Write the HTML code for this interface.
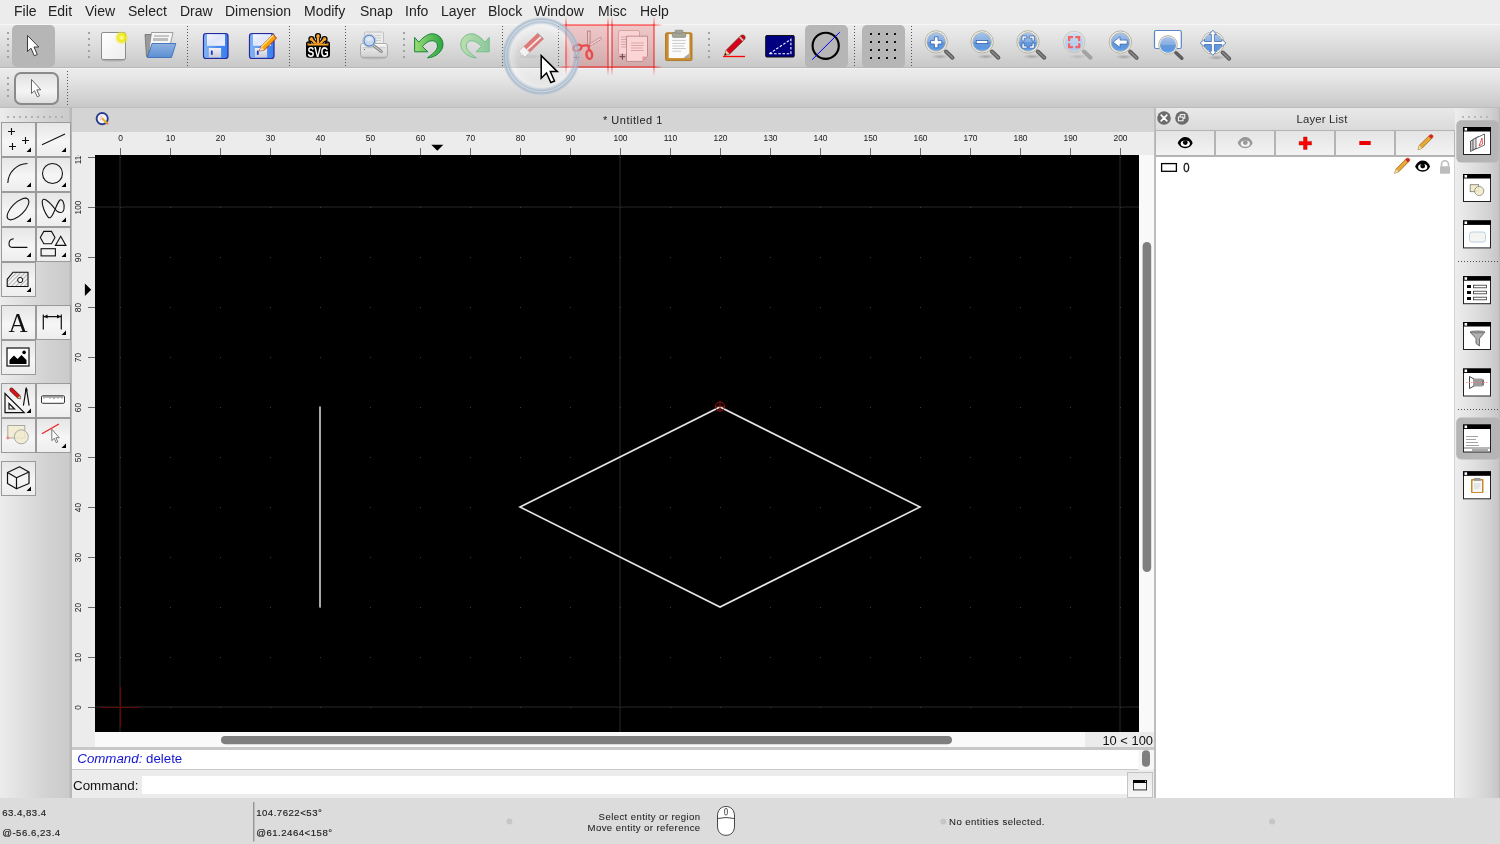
<!DOCTYPE html>
<html><head><meta charset="utf-8">
<style>
*{box-sizing:border-box}
html,body{margin:0;padding:0}
body{will-change:transform}
body{width:1500px;height:844px;position:relative;overflow:hidden;background:#ececec;font-family:"Liberation Sans",sans-serif;color:#000}
.a{position:absolute}
.menu span{position:absolute;top:4px;font-size:14px;line-height:14px;color:#222}
.tb{position:absolute;left:0;width:1500px;background:linear-gradient(#ececec,#e5e5e5 25%,#d8d8d8 60%,#c8c8c8)}
.vdots{position:absolute;width:1px;background:repeating-linear-gradient(#6a6a6a 0 1px,transparent 1px 3px)}
.hdl{position:absolute;width:2px;height:26px;background:repeating-linear-gradient(#a8a8a8 0 2px,transparent 2px 6px)}
.tbtn{position:absolute;background:linear-gradient(#eeeeee,#e6e6e6 45%,#f6f6f6 55%,#ececec);border:1px solid #9a9a9a}
.corner{position:absolute;right:3px;bottom:3px;width:0;height:0;border-left:9px solid transparent;border-bottom:9px solid #000}
svg{position:absolute;overflow:visible}
</style></head><body>

<!-- MENU BAR -->
<div class="a menu" style="left:0;top:0;width:1500px;height:24px;background:#ececec">
<span style="left:14px">File</span>
<span style="left:48px">Edit</span>
<span style="left:85px">View</span>
<span style="left:128px">Select</span>
<span style="left:180px">Draw</span>
<span style="left:225px">Dimension</span>
<span style="left:304px">Modify</span>
<span style="left:360px">Snap</span>
<span style="left:405px">Info</span>
<span style="left:441px">Layer</span>
<span style="left:488px">Block</span>
<span style="left:534px">Window</span>
<span style="left:598px">Misc</span>
<span style="left:640px">Help</span>
</div>

<!-- TOOLBAR 1 -->
<div class="tb" style="top:24px;height:44px;border-top:1px solid #f6f6f6;border-bottom:1px solid #b9b9b9"></div>
<!-- TOOLBAR 2 -->
<div class="tb" style="top:68px;height:40px;border-top:1px solid #f2f2f2;border-bottom:1px solid #bcbcbc"></div>


<!-- TOOLBAR ICONS -->
<svg class="a" style="left:0;top:0" width="1500" height="110" viewBox="0 0 1500 110">
<defs>
<linearGradient id="gBlueDisc" x1="0" y1="0" x2="0" y2="1"><stop offset="0" stop-color="#a9c4ea"/><stop offset="0.48" stop-color="#86ade0"/><stop offset="0.5" stop-color="#6799d8"/><stop offset="0.85" stop-color="#5d98e4"/><stop offset="1" stop-color="#7eb0ee"/></linearGradient>
<linearGradient id="gBlueDiscF" x1="0" y1="0" x2="0" y2="1"><stop offset="0" stop-color="#d0def2"/><stop offset="0.5" stop-color="#bcd0ec"/><stop offset="1" stop-color="#b0cbee"/></linearGradient>
<linearGradient id="gFloppy" x1="0" y1="0" x2="1" y2="0"><stop offset="0" stop-color="#86b8f6"/><stop offset="0.5" stop-color="#4f8ef0"/><stop offset="1" stop-color="#3a7ff0"/></linearGradient>
<linearGradient id="gLabel" x1="0" y1="0" x2="1" y2="1"><stop offset="0" stop-color="#f4f6ff"/><stop offset="0.5" stop-color="#dfe6fb"/><stop offset="1" stop-color="#f2f4fc"/></linearGradient>
<linearGradient id="gShut" x1="0" y1="0" x2="0" y2="1"><stop offset="0" stop-color="#f0f0f4"/><stop offset="1" stop-color="#c9c9d6"/></linearGradient>
<linearGradient id="gUndo" x1="0" y1="0" x2="1" y2="0"><stop offset="0" stop-color="#9bdc74"/><stop offset="1" stop-color="#2fa544"/></linearGradient>
<linearGradient id="gRedo" x1="0" y1="0" x2="1" y2="0"><stop offset="0" stop-color="#8cc89c"/><stop offset="1" stop-color="#bde0ae"/></linearGradient>
<linearGradient id="gFolder" x1="0" y1="0" x2="0" y2="1"><stop offset="0" stop-color="#8fb2e0"/><stop offset="1" stop-color="#5b8fd4"/></linearGradient>
<linearGradient id="gPage" x1="0" y1="0" x2="1" y2="1"><stop offset="0" stop-color="#ffffff"/><stop offset="1" stop-color="#ececec"/></linearGradient>
<linearGradient id="gPrinter" x1="0" y1="0" x2="0" y2="1"><stop offset="0" stop-color="#f4f4f4"/><stop offset="1" stop-color="#cfcfcf"/></linearGradient>
<radialGradient id="gGlow"><stop offset="0" stop-color="#ffffe0"/><stop offset="0.2" stop-color="#fbf870"/><stop offset="0.5" stop-color="#eee810"/><stop offset="0.75" stop-color="#eee830" stop-opacity="0.6"/><stop offset="1" stop-color="#eee830" stop-opacity="0"/></radialGradient>
<radialGradient id="gShadow"><stop offset="0" stop-color="#000" stop-opacity="0.22"/><stop offset="1" stop-color="#000" stop-opacity="0"/></radialGradient>
</defs>

<!-- handles -->
<g fill="#a2a2a2">
<rect x="7" y="32" width="2" height="2"/><rect x="7" y="38" width="2" height="2"/><rect x="7" y="44" width="2" height="2"/><rect x="7" y="50" width="2" height="2"/><rect x="7" y="56" width="2" height="2"/>
<rect x="88" y="32" width="2" height="2"/><rect x="88" y="38" width="2" height="2"/><rect x="88" y="44" width="2" height="2"/><rect x="88" y="50" width="2" height="2"/><rect x="88" y="56" width="2" height="2"/>
<rect x="403" y="32" width="2" height="2"/><rect x="403" y="38" width="2" height="2"/><rect x="403" y="44" width="2" height="2"/><rect x="403" y="50" width="2" height="2"/><rect x="403" y="56" width="2" height="2"/>
<rect x="708" y="32" width="2" height="2"/><rect x="708" y="38" width="2" height="2"/><rect x="708" y="44" width="2" height="2"/><rect x="708" y="50" width="2" height="2"/><rect x="708" y="56" width="2" height="2"/>
<rect x="7" y="77" width="2" height="2"/><rect x="7" y="83" width="2" height="2"/><rect x="7" y="89" width="2" height="2"/><rect x="7" y="95" width="2" height="2"/>
</g>
<!-- dotted separators -->
<g stroke="#555" stroke-width="1" stroke-dasharray="1 2">
<line x1="187.5" y1="26" x2="187.5" y2="66"/>
<line x1="289.5" y1="26" x2="289.5" y2="66"/>
<line x1="345.5" y1="26" x2="345.5" y2="66"/>
<line x1="502.5" y1="26" x2="502.5" y2="66"/>
<line x1="558.5" y1="26" x2="558.5" y2="66"/>
<line x1="854.5" y1="26" x2="854.5" y2="66"/>
<line x1="911.5" y1="26" x2="911.5" y2="66"/>
<line x1="67.5" y1="71" x2="67.5" y2="105"/>
</g>

<!-- selected buttons -->
<rect x="12" y="25" width="43" height="42" rx="5" fill="#b6b6b6"/>
<rect x="805" y="25" width="43" height="43" rx="5" fill="#b6b6b6"/>
<rect x="862" y="25" width="43" height="43" rx="5" fill="#b6b6b6"/>

<!-- pointer -->
<path d="M27.5,35.5 L27.5,51.5 L31,48.2 L34.3,55.8 L37.3,54.5 L34,47 L38.8,47 Z" fill="#fff" stroke="#3a3a3a" stroke-width="1" stroke-linejoin="round"/>

<!-- toolbar2 button -->
<linearGradient id="gTb2" x1="0" y1="0" x2="0" y2="1"><stop offset="0" stop-color="#e0e0e0"/><stop offset="0.5" stop-color="#f2f2f2"/><stop offset="0.6" stop-color="#f4f4f4"/><stop offset="1" stop-color="#dcdcdc"/></linearGradient>
<rect x="15" y="73" width="43" height="31" rx="6" fill="url(#gTb2)" stroke="#8a8a8a" stroke-width="2"/>
<path d="M31.5,79.5 L31.5,93.5 L34.5,90.8 L37.3,96.8 L39.5,95.8 L36.8,89.8 L40.8,89.8 Z" fill="#fff" stroke="#555" stroke-width="0.9" stroke-linejoin="round"/>

<!-- new doc -->
<ellipse cx="113.5" cy="60" rx="12" ry="1.6" fill="#999" opacity="0.6"/>
<rect x="101.5" y="32.5" width="24" height="27" rx="1.5" fill="url(#gPage)" stroke="#8c8c8c" stroke-width="1"/>
<circle cx="121.7" cy="37.7" r="7" fill="url(#gGlow)"/>

<!-- open folder -->
<path d="M145,34.5 L151,34.5 L151,43 L147.5,56.5 L146.5,56.5 Z" fill="#9a9a9a" stroke="#6e6e6e" stroke-width="0.8"/>
<path d="M151.5,32.5 L173,32.5 L170.5,43.5 L149,50 Z" fill="#f6f6f6" stroke="#8a8a8a" stroke-width="0.8"/>
<rect x="154" y="35" width="15" height="2" fill="#c4c4c4"/><rect x="153" y="38" width="15" height="3" fill="#bdbdbd"/>
<path d="M152,43.5 L175.8,43.5 L171.5,57.5 L147.3,57.5 Z" fill="url(#gFolder)" stroke="#3c6fb8" stroke-width="0.9" stroke-linejoin="round"/>

<!-- save -->
<g id="floppy">
<rect x="203.5" y="33.5" width="24.5" height="25" rx="2.5" fill="url(#gFloppy)" stroke="#28289a" stroke-width="1.2"/>
<rect x="207" y="34.2" width="18" height="11.6" fill="url(#gLabel)"/>
<rect x="208.8" y="48" width="12.3" height="9.5" fill="url(#gShut)"/>
<rect x="210.9" y="50.6" width="1.8" height="4.2" fill="#1038d8"/>
</g>
<use href="#floppy" x="46"/>
<path d="M259.5,51 L261,46.5 L273,34.5 L276.5,38 L264.5,50 Z" fill="#f8a10c" stroke="#a8280a" stroke-width="0.9" stroke-linejoin="round"/>
<path d="M261,46.5 L273,34.5 L274,35.5 L262,47.5 Z" fill="#ffe070"/>
<path d="M259.5,51 L261,46.5 L264.5,50 Z" fill="#f3d9a8"/>

<!-- svg logo -->
<g fill="#f9a52b" stroke="#000" stroke-width="1.3">
<circle cx="318" cy="36.2" r="2.5"/><circle cx="311.5" cy="39.2" r="2.5"/><circle cx="324.5" cy="39.2" r="2.5"/>
<circle cx="308.6" cy="44" r="2"/><circle cx="327.4" cy="44" r="2"/>
</g>
<g stroke="#000" stroke-width="4.2" stroke-linecap="round">
<line x1="318" y1="37" x2="318" y2="45"/><line x1="312.3" y1="40" x2="317" y2="45"/><line x1="323.7" y1="40" x2="319" y2="45"/>
</g>
<g stroke="#f9a52b" stroke-width="2.4" stroke-linecap="round">
<line x1="318" y1="37" x2="318" y2="45"/><line x1="312.3" y1="40" x2="317" y2="45"/><line x1="323.7" y1="40" x2="319" y2="45"/>
</g>
<circle cx="318" cy="36.2" r="1.6" fill="#f9a52b"/><circle cx="311.5" cy="39.2" r="1.6" fill="#f9a52b"/><circle cx="324.5" cy="39.2" r="1.6" fill="#f9a52b"/>
<rect x="306" y="43.5" width="24" height="14.3" rx="3" fill="#000"/>
<path d="M307.5,44.3 Q318,42 328.5,44.3 L328.5,45.5 L307.5,45.5 Z" fill="#f9a52b"/>
<text transform="translate(318,56.6) scale(0.74,1)" x="0" y="0" text-anchor="middle" font-family="Liberation Sans" font-weight="bold" font-size="13.8" letter-spacing="-0.3" fill="#fff">SVG</text>

<!-- print preview -->
<rect x="364.5" y="32" width="19" height="13" rx="1" fill="#ececec" stroke="#b8b8b8" stroke-width="0.8"/>
<g stroke="#cfcfcf" stroke-width="1"><line x1="375" y1="35.5" x2="381" y2="35.5"/><line x1="375" y1="38" x2="381" y2="38"/><line x1="375" y1="40.5" x2="381" y2="40.5"/></g>
<ellipse cx="374" cy="57.8" rx="13" ry="1.6" fill="#aaa" opacity="0.6"/>
<rect x="360.5" y="43.5" width="27" height="13.8" rx="2.5" fill="url(#gPrinter)" stroke="#a4a4a4" stroke-width="0.9"/>
<line x1="362.5" y1="47.8" x2="385.5" y2="47.8" stroke="#bdbdbd" stroke-width="0.8"/>
<line x1="362.5" y1="44.6" x2="385.5" y2="44.6" stroke="#fff" stroke-width="0.8"/>
<circle cx="364.5" cy="49.5" r="0.6" fill="#555"/>
<line x1="373.5" y1="45.5" x2="381.3" y2="51.5" stroke="#8a8a8a" stroke-width="3" stroke-linecap="round"/>
<line x1="373.5" y1="45.5" x2="381.3" y2="51.5" stroke="#d8d8d8" stroke-width="1" stroke-linecap="round"/>
<circle cx="369.3" cy="40.7" r="6.6" fill="#f4f4f4" stroke="#b0b0b0" stroke-width="0.7"/>
<circle cx="369.3" cy="40.7" r="5.4" fill="#c6d8ee" stroke="#4c80cc" stroke-width="1.1"/>
<ellipse cx="369" cy="39" rx="3.5" ry="2.2" fill="#e6eef8" opacity="0.8"/>
<!-- undo / redo -->
<path d="M414.6,37.4 L418.8,42.2 C422,38.5 427,33.8 432,33.8 C438.5,33.8 443,38.5 443,44.5 C443,51 436,57.5 427.5,57.8 C431,55 437.5,51 437.5,46 C437.5,42.5 435,40.7 432,40.7 C428.5,40.7 425,43.5 422.4,46.4 L427.8,51.8 L414.6,51.8 Z" fill="url(#gUndo)" stroke="#17843a" stroke-width="1" stroke-linejoin="round"/>
<path transform="translate(903.8,0) scale(-1,1)" d="M414.6,37.4 L418.8,42.2 C422,38.5 427,33.8 432,33.8 C438.5,33.8 443,38.5 443,44.5 C443,51 436,57.5 427.5,57.8 C431,55 437.5,51 437.5,46 C437.5,42.5 435,40.7 432,40.7 C428.5,40.7 425,43.5 422.4,46.4 L427.8,51.8 L414.6,51.8 Z" fill="url(#gRedo)" stroke="#78bd8e" stroke-width="1" stroke-linejoin="round"/>

<!-- eraser -->
<ellipse cx="529" cy="56.5" rx="10" ry="1.8" fill="#bbb" opacity="0.5"/>
<path d="M537.4,33.2 L543.7,38.9 L524.8,57.2 L518.5,51.2 Z" fill="#df7474"/>
<path d="M540.5,36 L541.8,37.2 L522,55.6 L520.8,54.4 Z" fill="#f0f0f0"/>
<path d="M523.5,46.4 L529.8,52.3 L524.8,57.2 L518.5,51.2 Z" fill="#f2f2f2" stroke="#b8b8b8" stroke-width="0.6"/>
<path d="M537.4,33.2 L543.7,38.9" stroke="#9a8c8c" stroke-width="1"/>

<!-- cut / copy (faded) -->
<g>
<path d="M587.6,31 L590.2,31 L589.8,46.5 L587.8,46.5 Z" fill="#f8f8f8" stroke="#8a6a6a" stroke-width="0.7"/>
<path d="M600.5,37.3 L601.3,39.3 L590.3,45.8 L589.2,44.2 Z" fill="#f8f8f8" stroke="#8a6a6a" stroke-width="0.7" stroke-dasharray="1.2 0.6"/>
<ellipse cx="577.3" cy="47.8" rx="4.3" ry="2.9" transform="rotate(-18 577.3 47.8)" fill="none" stroke="#e25a5a" stroke-width="2.4"/>
<ellipse cx="589.3" cy="54.6" rx="2.8" ry="4.3" transform="rotate(-8 589.3 54.6)" fill="none" stroke="#e25a5a" stroke-width="2.4"/>
<path d="M581.2,46.2 C584,45.5 586.5,45 588.6,45.8 L589,50" fill="none" stroke="#e25a5a" stroke-width="2.3"/>
</g>
<path d="M573.3,57.4 h6 M576.3,54.4 v6" stroke="#6a5a5a" stroke-width="1"/>
<rect x="618.5" y="30.5" width="21" height="24" rx="1.5" fill="#f8f8f8" stroke="#c8b4b4" stroke-width="0.8"/>
<path d="M626.5,36.2 L647.5,36.2 L647.5,56.5 L642.5,61.4 L626.5,61.4 Z" fill="#fbfbfb" stroke="#a89090" stroke-width="0.8"/>
<path d="M642.5,61.4 L642.5,56.5 L647.5,56.5 Z" fill="#d9b8b8"/>
<g stroke="#c7a9a9" stroke-width="0.7"><line x1="631" y1="43" x2="644" y2="43"/><line x1="631" y1="45.5" x2="644" y2="45.5"/><line x1="631" y1="48" x2="643" y2="48"/><line x1="631" y1="50.5" x2="644" y2="50.5"/><line x1="621" y1="37" x2="626" y2="37"/><line x1="621" y1="39.5" x2="626" y2="39.5"/><line x1="621" y1="42" x2="626" y2="42"/><line x1="621" y1="44.5" x2="626" y2="44.5"/><line x1="621" y1="47" x2="626" y2="47"/></g>
<path d="M619.4,56.7 h6 M622.4,53.7 v6" stroke="#5a4646" stroke-width="1"/>

<!-- paste clipboard -->
<rect x="665.5" y="32.8" width="26.5" height="27.8" rx="1.5" fill="#c98a2c" stroke="#a56d1c" stroke-width="0.8"/>
<rect x="668.7" y="34.1" width="20.7" height="24" fill="#fbfbfb"/>
<path d="M683.4,58.1 L689.4,53.3 L689.4,58.1 Z" fill="#a8a8a8"/>
<rect x="672.3" y="32.5" width="13.5" height="4.9" rx="1.2" fill="#a4a496" stroke="#808078" stroke-width="0.6"/>
<rect x="675" y="30.2" width="8" height="3" rx="0.8" fill="#a4a496" stroke="#808078" stroke-width="0.6"/>
<g stroke="#c4c4c4" stroke-width="0.9"><line x1="672.3" y1="40.4" x2="685.8" y2="40.4"/><line x1="672.3" y1="43.4" x2="685.3" y2="43.4"/><line x1="672.3" y1="46" x2="684" y2="46"/><line x1="672.3" y1="48.5" x2="685.8" y2="48.5"/><line x1="672.3" y1="51.2" x2="681" y2="51.2"/></g>

<!-- pencil with red line -->
<path d="M724.5,55.4 L726.2,50.2 L740.5,35.9 C742,34.4 744.5,35 745,36.6 C745.6,38.2 744.5,39.5 743.5,40.5 L729.6,54 Z" fill="#d8001c" stroke="#6a3a10" stroke-width="0.8" stroke-linejoin="round"/>
<path d="M724.5,55.4 L726.2,50.2 L729.6,54 Z" fill="#f0c8a0"/>
<path d="M724.5,55.4 L725.3,53 L726.9,54.6 Z" fill="#111"/>
<path d="M739,37.5 L742.6,41.2 L743.8,40 L740.2,36.3 Z" fill="#c8c8c8"/>
<line x1="723" y1="56.5" x2="745" y2="56.5" stroke="#ff0000" stroke-width="1.3"/>

<!-- dim icon -->
<rect x="765.7" y="35.5" width="28.5" height="21.5" rx="1" fill="#000080" stroke="#111" stroke-width="1"/>
<path d="M769.3,53.7 L790.9,39.3 L790.9,53.7 Z" fill="none" stroke="#fff" stroke-width="1.1" stroke-dasharray="2.6 1.6"/>

<!-- circle w/ line -->
<circle cx="825.7" cy="45.8" r="13.1" fill="none" stroke="#000" stroke-width="2.1"/>
<line x1="812.2" y1="59.7" x2="839.8" y2="32.1" stroke="#0000ff" stroke-width="1"/>

<!-- grid dots -->
<g fill="#111">
<rect x="870" y="33" width="2" height="2"/><rect x="878" y="33" width="2" height="2"/><rect x="886" y="33" width="2" height="2"/><rect x="894" y="33" width="2" height="2"/>
<rect x="870" y="41" width="2" height="2"/><rect x="878" y="41" width="2" height="2"/><rect x="886" y="41" width="2" height="2"/><rect x="894" y="41" width="2" height="2"/>
<rect x="870" y="49" width="2" height="2"/><rect x="878" y="49" width="2" height="2"/><rect x="886" y="49" width="2" height="2"/><rect x="894" y="49" width="2" height="2"/>
<rect x="870" y="57" width="2" height="2"/><rect x="878" y="57" width="2" height="2"/><rect x="886" y="57" width="2" height="2"/><rect x="894" y="57" width="2" height="2"/>
</g>

<!-- magnifiers -->
<g id="mag">
<ellipse cx="939.8" cy="56.6" rx="9" ry="2.4" fill="url(#gShadow)"/>
<line x1="946" y1="51.5" x2="952.5" y2="57.7" stroke="#5e5e5e" stroke-width="4" stroke-linecap="round"/>
<line x1="946" y1="51.5" x2="952.5" y2="57.7" stroke="#8a8a8a" stroke-width="1.5" stroke-linecap="round"/>
<circle cx="936.2" cy="41.9" r="11.2" fill="#f3f2ec" stroke="#aeac9c" stroke-width="0.9"/>
<circle cx="936.2" cy="41.9" r="9.4" fill="url(#gBlueDisc)" stroke="#b9b7a8" stroke-width="0.8"/>
</g>
<path d="M934.4,36.8 h3.6 v3.8 h3.8 v3.4 h-3.8 v3.8 h-3.6 v-3.8 h-3.8 v-3.4 h3.8 Z" fill="#fff" stroke="#2f5fa8" stroke-width="0.8"/>
<use href="#mag" x="45.9"/>
<rect x="976.2" y="40.4" width="11.6" height="3.2" fill="#fff" stroke="#2f5fa8" stroke-width="0.8"/>
<use href="#mag" x="91.8"/>
<g fill="#fff" stroke="#2f5fa8" stroke-width="0.7">
<path d="M1022,36 h5 v2.2 h-2.8 v2.8 h-2.2 Z"/><path d="M1034.3,36 h-5 v2.2 h2.8 v2.8 h2.2 Z"/>
<path d="M1022,48.2 h5 v-2.2 h-2.8 v-2.8 h-2.2 Z"/><path d="M1034.3,48.2 h-5 v-2.2 h2.8 v-2.8 h2.2 Z"/>
</g>
<g opacity="0.55">
<ellipse cx="1077.8" cy="56.6" rx="9" ry="2.4" fill="url(#gShadow)"/>
<line x1="1084" y1="51.5" x2="1090.5" y2="57.7" stroke="#7a7a7a" stroke-width="4" stroke-linecap="round"/>
<circle cx="1074.2" cy="41.9" r="10.7" fill="#efeee6" stroke="#b7b5a6" stroke-width="1.1"/>
</g>
<circle cx="1074.2" cy="41.9" r="9.5" fill="url(#gBlueDiscF)"/>
<g fill="#f06464">
<path d="M1068,36 h5 v2.2 h-2.8 v2.8 h-2.2 Z"/><path d="M1080.3,36 h-5 v2.2 h2.8 v2.8 h2.2 Z"/>
<path d="M1068,48.2 h5 v-2.2 h-2.8 v-2.8 h-2.2 Z"/><path d="M1080.3,48.2 h-5 v-2.2 h2.8 v-2.8 h2.2 Z"/>
</g>
<use href="#mag" x="184.2" y="0.2"/>
<path d="M1113.2,42.1 L1120,36.8 L1120,40.1 L1127.2,40.1 L1127.2,44.1 L1120,44.1 L1120,47.5 Z" fill="#fff" stroke="#2f5fa8" stroke-width="0.7" stroke-linejoin="round"/>
<!-- zoom window -->
<rect x="1154.5" y="30.5" width="26.8" height="18" rx="1.5" fill="#fff" stroke="#5a86c6" stroke-width="1.2"/>
<line x1="1176" y1="52.8" x2="1181.8" y2="58.2" stroke="#5e5e5e" stroke-width="3.6" stroke-linecap="round"/>
<circle cx="1168" cy="44.9" r="9.3" fill="#efeee6" stroke="#b7b5a6" stroke-width="1"/>
<circle cx="1168" cy="44.9" r="8" fill="url(#gBlueDisc)"/>
<!-- pan -->
<use href="#mag" x="276.7" y="1"/>
<g fill="#fff" stroke="#2f5fa8" stroke-width="0.7" stroke-linejoin="round">
<path d="M1212.9,30.2 L1216.5,34.5 L1214.4,34.5 L1214.4,41.5 L1221.7,41.5 L1221.7,39.4 L1226,43 L1221.7,46.6 L1221.7,44.5 L1214.4,44.5 L1214.4,51.2 L1216.5,51.2 L1212.9,55.3 L1209.3,51.2 L1211.4,51.2 L1211.4,44.5 L1204.5,44.5 L1204.5,46.6 L1200.2,43 L1204.5,39.4 L1204.5,41.5 L1211.4,41.5 L1211.4,34.5 L1209.3,34.5 Z"/>
</g>

<!-- red highlight boxes -->
<rect x="566" y="25" width="42" height="42" fill="#ff0000" fill-opacity="0.15"/>
<rect x="612" y="25" width="42" height="42" fill="#ff0000" fill-opacity="0.15"/>
<rect x="557" y="24.2" width="106" height="1.6" fill="url(#gHL)"/>
<rect x="557" y="66.2" width="106" height="1.6" fill="url(#gHL)"/>
<rect x="565.2" y="16" width="1.6" height="60" fill="url(#gVL)"/>
<rect x="607.2" y="16" width="1.6" height="60" fill="url(#gVL)"/>
<rect x="611.2" y="16" width="1.6" height="60" fill="url(#gVL)"/>
<rect x="653.2" y="16" width="1.6" height="60" fill="url(#gVL)"/>

<!-- click ring + cursor -->
<defs>
<radialGradient id="gRing" cx="541.3" cy="56.2" r="39.5" gradientUnits="userSpaceOnUse">
<stop offset="0" stop-color="#fff" stop-opacity="0"/>
<stop offset="0.6" stop-color="#fff" stop-opacity="0.05"/>
<stop offset="0.78" stop-color="#fff" stop-opacity="0.35"/>
<stop offset="0.83" stop-color="#b8cadb" stop-opacity="0.55"/>
<stop offset="0.87" stop-color="#9fb5cb" stop-opacity="0.75"/>
<stop offset="0.9" stop-color="#c4d2e0" stop-opacity="0.6"/>
<stop offset="0.93" stop-color="#9ab0c7" stop-opacity="0.8"/>
<stop offset="0.965" stop-color="#a9bdd0" stop-opacity="0.55"/>
<stop offset="1" stop-color="#b0c2d4" stop-opacity="0"/>
</radialGradient>
<linearGradient id="gHL" x1="557" y1="0" x2="663" y2="0" gradientUnits="userSpaceOnUse"><stop offset="0" stop-color="#ff0000" stop-opacity="0"/><stop offset="0.09" stop-color="#ff0000" stop-opacity="0.55"/><stop offset="0.91" stop-color="#ff0000" stop-opacity="0.55"/><stop offset="1" stop-color="#ff0000" stop-opacity="0"/></linearGradient>
<linearGradient id="gVL" x1="0" y1="16" x2="0" y2="76" gradientUnits="userSpaceOnUse"><stop offset="0" stop-color="#ff0000" stop-opacity="0"/><stop offset="0.15" stop-color="#ff0000" stop-opacity="0.55"/><stop offset="0.82" stop-color="#ff0000" stop-opacity="0.55"/><stop offset="1" stop-color="#ff0000" stop-opacity="0"/></linearGradient>
</defs>
<circle cx="541.3" cy="56.2" r="39.5" fill="url(#gRing)"/>
<path d="M541.2,55.6 L541.2,78.2 L546.5,73 L550.8,82.5 L554.5,81 L550.3,71.6 L557.4,71.6 Z" fill="#fff" stroke="#000" stroke-width="1.5" stroke-linejoin="miter"/>
</svg>

<!-- LEFT TOOL PANEL -->
<div class="a" style="left:0;top:108px;width:72px;height:690px;background:linear-gradient(90deg,#ececec,#e2e2e2 25%,#d2d2d2 65%,#cbcbcb 96%,#b9b9b9 97.2%,#b9b9b9)"></div>
<svg class="a" style="left:0;top:100px" width="72" height="410" viewBox="0 100 72 410">
<defs>
<linearGradient id="gBtn" x1="0" y1="0" x2="0" y2="1"><stop offset="0" stop-color="#e6e6e6"/><stop offset="0.35" stop-color="#efefef"/><stop offset="0.55" stop-color="#f6f6f6"/><stop offset="1" stop-color="#ededed"/></linearGradient>
<pattern id="hatch" width="3" height="3" patternUnits="userSpaceOnUse" patternTransform="rotate(45)"><line x1="0" y1="0" x2="0" y2="3" stroke="#555" stroke-width="0.8"/></pattern>
</defs>
<g fill="#b0b0b0">
<rect x="7" y="116" width="2" height="2"/><rect x="13" y="116" width="2" height="2"/><rect x="19" y="116" width="2" height="2"/><rect x="25" y="116" width="2" height="2"/><rect x="31" y="116" width="2" height="2"/><rect x="37" y="116" width="2" height="2"/><rect x="43" y="116" width="2" height="2"/><rect x="49" y="116" width="2" height="2"/><rect x="55" y="116" width="2" height="2"/><rect x="61" y="116" width="2" height="2"/>
</g>
<g fill="url(#gBtn)" stroke="#9a9a9a" stroke-width="1">
<rect x="1.5" y="122.5" width="34" height="34"/><rect x="36.5" y="122.5" width="34" height="34"/>
<rect x="1.5" y="157.5" width="34" height="34"/><rect x="36.5" y="157.5" width="34" height="34"/>
<rect x="1.5" y="192.5" width="34" height="34"/><rect x="36.5" y="192.5" width="34" height="34"/>
<rect x="1.5" y="227.5" width="34" height="34"/><rect x="36.5" y="227.5" width="34" height="34"/>
<rect x="1.5" y="262.5" width="34" height="34"/>
<rect x="1.5" y="305.5" width="34" height="34"/><rect x="36.5" y="305.5" width="34" height="34"/>
<rect x="1.5" y="340.5" width="34" height="34"/>
<rect x="1.5" y="383.5" width="34" height="34"/><rect x="36.5" y="383.5" width="34" height="34"/>
<rect x="1.5" y="418.5" width="34" height="34"/><rect x="36.5" y="418.5" width="34" height="34"/>
<rect x="1.5" y="461.5" width="34" height="34"/>
</g>
<g fill="#000">
<path d="M31,147.5 L31,152 L26.5,152 Z"/><path d="M66,147.5 L66,152 L61.5,152 Z"/>
<path d="M31,182.5 L31,187 L26.5,187 Z"/><path d="M66,182.5 L66,187 L61.5,187 Z"/>
<path d="M31,217.5 L31,222 L26.5,222 Z"/><path d="M66,217.5 L66,222 L61.5,222 Z"/>
<path d="M31,252.5 L31,257 L26.5,257 Z"/><path d="M66,252.5 L66,257 L61.5,257 Z"/>
<path d="M31,287.5 L31,292 L26.5,292 Z"/>
<path d="M66,330.5 L66,335 L61.5,335 Z"/>
<path d="M31,408.5 L31,413 L26.5,413 Z"/>
<path d="M66,443.5 L66,448 L61.5,448 Z"/>
<path d="M31,486.5 L31,491 L26.5,491 Z"/>
</g>
<g fill="none" stroke="#111" stroke-width="1.1">
<!-- points -->
<path d="M8,131.5 h7 M11.5,128 v7 M22,140.5 h7 M25.5,137 v7 M9,146.5 h7 M12.5,143 v7"/>
<!-- line -->
<line x1="42" y1="144.7" x2="65" y2="134.1"/>
<!-- arc -->
<path d="M7.8,183 A20,20 0 0 1 27.5,163.5"/>
<!-- circle -->
<circle cx="52.5" cy="173.5" r="10"/>
<!-- ellipse -->
<ellipse cx="18" cy="209" rx="14" ry="6.2" transform="rotate(-45 18 209)"/>
<!-- spline -->
<path d="M42.2,201.5 C42.5,196 49,201 55,209 C58,213.5 63,214 64,209 C65,203 62,198.5 60,200 C57.5,202 55.5,209 53,214 C51.5,217 50,219 48,217 C45,213 42,206 42.2,201.5 Z"/>
<!-- polyline -->
<path d="M13.8,238.8 C10.5,239 9,241.5 9,244 C9,246 10.5,247.4 13,247.4 L27.4,247.4"/>
<!-- shapes -->
<path d="M40.3,237.6 L43.8,231.4 L51.5,231.4 L55,237.6 L51.5,243.8 L43.8,243.8 Z"/>
<path d="M60.7,236.3 L65.9,245.4 L55.4,245.4 Z"/>
<rect x="41.1" y="248.7" width="14.3" height="7.2"/>
</g>
<!-- hatch -->
<path d="M7.2,286.5 L7.2,279.3 L13,272.2 L28,272.2 L28,286.5 Z" fill="url(#hatch)" stroke="#111" stroke-width="1.1"/>
<circle cx="20.2" cy="280" r="2.6" fill="#f2f2f2" stroke="#111" stroke-width="1"/>
<!-- text A -->
<text x="18" y="332.3" text-anchor="middle" font-family="Liberation Serif" font-size="26.5" fill="#111">A</text>
<!-- dimension -->
<g stroke="#111" stroke-width="1.2" fill="none">
<path d="M43.3,314.5 v15 M61.3,314.5 v15 M43.5,316.6 h17.6"/>
</g>
<path d="M43.6,316.6 l4,-2 v4 Z M61,316.6 l-4,-2 v4 Z" fill="#111"/>
<!-- image -->
<rect x="7" y="348" width="22" height="18" fill="#fff" stroke="#222" stroke-width="1.3"/>
<path d="M9.5,364 L9.5,360 L14,355.5 L17.5,359 L21.5,355 L26.5,360 L26.5,364 Z" fill="#000"/>
<circle cx="24.1" cy="352.4" r="1.8" fill="#000"/>
<!-- set square / compass -->
<g fill="none" stroke="#111" stroke-width="1.2">
<path d="M5,393.5 L5,412.7 L24.2,412.7 Z"/>
<path d="M9,403.5 L9,409 L14.5,409 Z"/>
<path d="M26.3,387.5 L23.4,405.6 M26.3,387.5 L29.1,405.6"/>
</g>
<circle cx="26.3" cy="390" r="1.2" fill="#111"/>
<line x1="11.5" y1="389.8" x2="18.5" y2="396.6" stroke="#5a2a10" stroke-width="4.2" stroke-linecap="round"/>
<line x1="11.5" y1="389.8" x2="18.5" y2="396.6" stroke="#e01020" stroke-width="2.8" stroke-linecap="round"/>
<path d="M17.2,398 L20.8,399 L19.8,395.3 Z" fill="#f0d0a0" stroke="#5a2a10" stroke-width="0.5"/>
<!-- ruler -->
<rect x="41.5" y="395.8" width="23" height="7.5" rx="1.2" fill="#fff" stroke="#333" stroke-width="1"/>
<path d="M44,396.3 v2.2 M46,396.3 v1.6 M48,396.3 v1.6 M50,396.3 v2.2 M52,396.3 v1.6 M54,396.3 v2.8 M56,396.3 v1.6 M58,396.3 v2.2 M60,396.3 v1.6 M62,396.3 v2.2" stroke="#333" stroke-width="0.8"/>
<!-- overlap square circle -->
<rect x="7.8" y="425.5" width="17" height="12.5" fill="#f2edd4" stroke="#a8a8a0" stroke-width="1"/>
<circle cx="21.3" cy="436.8" r="7" fill="#f0ead0" fill-opacity="0.85" stroke="#a8a8a0" stroke-width="1"/>
<circle cx="7.8" cy="438" r="1.4" fill="#f08080"/>
<!-- select line -->
<line x1="41.9" y1="433.7" x2="58.9" y2="424" stroke="#f02020" stroke-width="1.3"/>
<path d="M51.8,429.2 L51.8,440.6 L54.3,438.3 L56.2,442.6 L57.8,441.9 L55.9,437.7 L59.2,437.7 Z" fill="#fff" stroke="#555" stroke-width="0.8" stroke-linejoin="round"/>
<!-- cube -->
<g fill="none" stroke="#111" stroke-width="1.2" stroke-linejoin="round">
<path d="M7.5,472.5 L19.5,466.8 L29,472 L29,483.5 L16.5,488.8 L7.5,483.5 Z"/>
<path d="M7.5,472.5 L16.5,477.8 L29,472 M16.5,477.8 L16.5,488.8"/>
</g>
</svg>

<!-- MDI AREA -->
<div class="a" style="left:72px;top:108px;width:1083px;height:24px;background:#d4d4d4"></div>
<div class="a" style="left:72px;top:132px;width:1083px;height:616px;background:#ececec"></div>
<div class="a" style="left:95px;top:155px;width:1044px;height:577px;background:#000"></div>
<div class="a" style="left:1139px;top:155px;width:16px;height:577px;background:#f9f9f9"></div>
<div class="a" style="left:95px;top:732px;width:990px;height:15px;background:#f9f9f9"></div>
<div class="a" style="left:1085px;top:732px;width:70px;height:15px;background:#ebebeb"></div>
<div class="a" style="left:72px;top:747px;width:1083px;height:3px;background:#c8c8c8"></div>
<div class="a" style="left:72px;top:750px;width:1083px;height:20px;background:#fff;border-bottom:1px solid #c8c8c8"></div>
<div class="a" style="left:72px;top:770px;width:1083px;height:28px;background:#ececec"></div>
<div class="a" style="left:142px;top:776px;width:986px;height:18px;background:#fff"></div>

<svg class="a" style="left:0;top:0" width="1500" height="844" viewBox="0 0 1500 844">
<defs><radialGradient id="gDocIco" cx="0.4" cy="0.4"><stop offset="0" stop-color="#fff"/><stop offset="0.6" stop-color="#e8e8f0"/><stop offset="1" stop-color="#c8d0e0"/></radialGradient></defs>
<circle cx="102.2" cy="118.6" r="5.6" fill="#f4f4f8" stroke="#2b3d8c" stroke-width="1.9"/>
<path d="M99.5,117.5 l3,-1.5 M100,120 l2.5,-3" stroke="#d08080" stroke-width="0.5"/>
<path d="M102.5,118.8 l4.5,4.5" stroke="#e8b020" stroke-width="2" stroke-linecap="round"/>
<circle cx="107.4" cy="123.6" r="1.1" fill="#e07070"/>
<text x="603" y="123.8" font-family="Liberation Sans" font-size="11" letter-spacing="0.5" fill="#222">* Untitled 1</text>
<g stroke="#141414" stroke-width="2">
<line x1="95" y1="707" x2="1139" y2="707"/><line x1="95" y1="207" x2="1139" y2="207"/>
<line x1="120" y1="155" x2="120" y2="732"/><line x1="620" y1="155" x2="620" y2="732"/><line x1="1120" y1="155" x2="1120" y2="732"/>
</g>
<path d="M120,707.5h1M120,657.5h1M120,607.5h1M120,557.5h1M120,507.5h1M120,457.5h1M120,407.5h1M120,357.5h1M120,307.5h1M120,257.5h1M120,207.5h1M120,157.5h1M170,707.5h1M170,657.5h1M170,607.5h1M170,557.5h1M170,507.5h1M170,457.5h1M170,407.5h1M170,357.5h1M170,307.5h1M170,257.5h1M170,207.5h1M170,157.5h1M220,707.5h1M220,657.5h1M220,607.5h1M220,557.5h1M220,507.5h1M220,457.5h1M220,407.5h1M220,357.5h1M220,307.5h1M220,257.5h1M220,207.5h1M220,157.5h1M270,707.5h1M270,657.5h1M270,607.5h1M270,557.5h1M270,507.5h1M270,457.5h1M270,407.5h1M270,357.5h1M270,307.5h1M270,257.5h1M270,207.5h1M270,157.5h1M320,707.5h1M320,657.5h1M320,607.5h1M320,557.5h1M320,507.5h1M320,457.5h1M320,407.5h1M320,357.5h1M320,307.5h1M320,257.5h1M320,207.5h1M320,157.5h1M370,707.5h1M370,657.5h1M370,607.5h1M370,557.5h1M370,507.5h1M370,457.5h1M370,407.5h1M370,357.5h1M370,307.5h1M370,257.5h1M370,207.5h1M370,157.5h1M420,707.5h1M420,657.5h1M420,607.5h1M420,557.5h1M420,507.5h1M420,457.5h1M420,407.5h1M420,357.5h1M420,307.5h1M420,257.5h1M420,207.5h1M420,157.5h1M470,707.5h1M470,657.5h1M470,607.5h1M470,557.5h1M470,507.5h1M470,457.5h1M470,407.5h1M470,357.5h1M470,307.5h1M470,257.5h1M470,207.5h1M470,157.5h1M520,707.5h1M520,657.5h1M520,607.5h1M520,557.5h1M520,507.5h1M520,457.5h1M520,407.5h1M520,357.5h1M520,307.5h1M520,257.5h1M520,207.5h1M520,157.5h1M570,707.5h1M570,657.5h1M570,607.5h1M570,557.5h1M570,507.5h1M570,457.5h1M570,407.5h1M570,357.5h1M570,307.5h1M570,257.5h1M570,207.5h1M570,157.5h1M620,707.5h1M620,657.5h1M620,607.5h1M620,557.5h1M620,507.5h1M620,457.5h1M620,407.5h1M620,357.5h1M620,307.5h1M620,257.5h1M620,207.5h1M620,157.5h1M670,707.5h1M670,657.5h1M670,607.5h1M670,557.5h1M670,507.5h1M670,457.5h1M670,407.5h1M670,357.5h1M670,307.5h1M670,257.5h1M670,207.5h1M670,157.5h1M720,707.5h1M720,657.5h1M720,607.5h1M720,557.5h1M720,507.5h1M720,457.5h1M720,407.5h1M720,357.5h1M720,307.5h1M720,257.5h1M720,207.5h1M720,157.5h1M770,707.5h1M770,657.5h1M770,607.5h1M770,557.5h1M770,507.5h1M770,457.5h1M770,407.5h1M770,357.5h1M770,307.5h1M770,257.5h1M770,207.5h1M770,157.5h1M820,707.5h1M820,657.5h1M820,607.5h1M820,557.5h1M820,507.5h1M820,457.5h1M820,407.5h1M820,357.5h1M820,307.5h1M820,257.5h1M820,207.5h1M820,157.5h1M870,707.5h1M870,657.5h1M870,607.5h1M870,557.5h1M870,507.5h1M870,457.5h1M870,407.5h1M870,357.5h1M870,307.5h1M870,257.5h1M870,207.5h1M870,157.5h1M920,707.5h1M920,657.5h1M920,607.5h1M920,557.5h1M920,507.5h1M920,457.5h1M920,407.5h1M920,357.5h1M920,307.5h1M920,257.5h1M920,207.5h1M920,157.5h1M970,707.5h1M970,657.5h1M970,607.5h1M970,557.5h1M970,507.5h1M970,457.5h1M970,407.5h1M970,357.5h1M970,307.5h1M970,257.5h1M970,207.5h1M970,157.5h1M1020,707.5h1M1020,657.5h1M1020,607.5h1M1020,557.5h1M1020,507.5h1M1020,457.5h1M1020,407.5h1M1020,357.5h1M1020,307.5h1M1020,257.5h1M1020,207.5h1M1020,157.5h1M1070,707.5h1M1070,657.5h1M1070,607.5h1M1070,557.5h1M1070,507.5h1M1070,457.5h1M1070,407.5h1M1070,357.5h1M1070,307.5h1M1070,257.5h1M1070,207.5h1M1070,157.5h1M1120,707.5h1M1120,657.5h1M1120,607.5h1M1120,557.5h1M1120,507.5h1M1120,457.5h1M1120,407.5h1M1120,357.5h1M1120,307.5h1M1120,257.5h1M1120,207.5h1M1120,157.5h1" stroke="#3c3c3c" stroke-width="1"/>
<g stroke="#660606" stroke-width="1.2"><line x1="100" y1="707.5" x2="140" y2="707.5"/><line x1="120.5" y1="687" x2="120.5" y2="727"/></g>
<line x1="320" y1="406.5" x2="320" y2="607.5" stroke="#a9a9a9" stroke-width="2"/>
<path d="M520,507 L720,407 L920,507 L720,607 Z" fill="none" stroke="#e6e6e6" stroke-width="1.6" stroke-linejoin="miter"/>
<g stroke="#9a1010" stroke-width="1" fill="none"><circle cx="720" cy="406.5" r="4.6"/><line x1="720" y1="401.5" x2="720" y2="411.5"/><line x1="715" y1="406.5" x2="725" y2="406.5" stroke-opacity="0.6"/></g>
<path d="M120.5,148v7M170.5,148v7M220.5,148v7M270.5,148v7M320.5,148v7M370.5,148v7M420.5,148v7M470.5,148v7M520.5,148v7M570.5,148v7M620.5,148v7M670.5,148v7M720.5,148v7M770.5,148v7M820.5,148v7M870.5,148v7M920.5,148v7M970.5,148v7M1020.5,148v7M1070.5,148v7M1120.5,148v7" stroke="#6a6a6a" stroke-width="1"/>
<path d="M88,707.5h7M88,657.5h7M88,607.5h7M88,557.5h7M88,507.5h7M88,457.5h7M88,407.5h7M88,357.5h7M88,307.5h7M88,257.5h7M88,207.5h7M88,157.5h7" stroke="#6a6a6a" stroke-width="1"/>
<g font-family="Liberation Sans" font-size="9.8" fill="#1a1a1a" text-anchor="middle"><text transform="translate(120.5,141) scale(0.86,1)" x="0" y="0">0</text><text transform="translate(170.5,141) scale(0.86,1)" x="0" y="0">10</text><text transform="translate(220.5,141) scale(0.86,1)" x="0" y="0">20</text><text transform="translate(270.5,141) scale(0.86,1)" x="0" y="0">30</text><text transform="translate(320.5,141) scale(0.86,1)" x="0" y="0">40</text><text transform="translate(370.5,141) scale(0.86,1)" x="0" y="0">50</text><text transform="translate(420.5,141) scale(0.86,1)" x="0" y="0">60</text><text transform="translate(470.5,141) scale(0.86,1)" x="0" y="0">70</text><text transform="translate(520.5,141) scale(0.86,1)" x="0" y="0">80</text><text transform="translate(570.5,141) scale(0.86,1)" x="0" y="0">90</text><text transform="translate(620.5,141) scale(0.86,1)" x="0" y="0">100</text><text transform="translate(670.5,141) scale(0.86,1)" x="0" y="0">110</text><text transform="translate(720.5,141) scale(0.86,1)" x="0" y="0">120</text><text transform="translate(770.5,141) scale(0.86,1)" x="0" y="0">130</text><text transform="translate(820.5,141) scale(0.86,1)" x="0" y="0">140</text><text transform="translate(870.5,141) scale(0.86,1)" x="0" y="0">150</text><text transform="translate(920.5,141) scale(0.86,1)" x="0" y="0">160</text><text transform="translate(970.5,141) scale(0.86,1)" x="0" y="0">170</text><text transform="translate(1020.5,141) scale(0.86,1)" x="0" y="0">180</text><text transform="translate(1070.5,141) scale(0.86,1)" x="0" y="0">190</text><text transform="translate(1120.5,141) scale(0.86,1)" x="0" y="0">200</text></g>
<clipPath id="clipL"><rect x="72" y="155" width="23" height="577"/></clipPath><g clip-path="url(#clipL)" font-family="Liberation Sans" font-size="9.8" fill="#1a1a1a" text-anchor="middle"><text transform="translate(80.8,707.5) rotate(-90) scale(0.86,1)" x="0" y="0">0</text><text transform="translate(80.8,657.5) rotate(-90) scale(0.86,1)" x="0" y="0">10</text><text transform="translate(80.8,607.5) rotate(-90) scale(0.86,1)" x="0" y="0">20</text><text transform="translate(80.8,557.5) rotate(-90) scale(0.86,1)" x="0" y="0">30</text><text transform="translate(80.8,507.5) rotate(-90) scale(0.86,1)" x="0" y="0">40</text><text transform="translate(80.8,457.5) rotate(-90) scale(0.86,1)" x="0" y="0">50</text><text transform="translate(80.8,407.5) rotate(-90) scale(0.86,1)" x="0" y="0">60</text><text transform="translate(80.8,357.5) rotate(-90) scale(0.86,1)" x="0" y="0">70</text><text transform="translate(80.8,307.5) rotate(-90) scale(0.86,1)" x="0" y="0">80</text><text transform="translate(80.8,257.5) rotate(-90) scale(0.86,1)" x="0" y="0">90</text><text transform="translate(80.8,207.5) rotate(-90) scale(0.86,1)" x="0" y="0">100</text><text transform="translate(80.8,157.5) rotate(-90) scale(0.86,1)" x="0" y="0">110</text></g>
<path d="M431.3,144.8 L443.3,144.8 L437.3,150.7 Z" fill="#000"/>
<path d="M84.9,283.6 L84.9,296 L91.2,289.8 Z" fill="#000"/>
<rect x="1142.6" y="242" width="8.6" height="330" rx="4.3" fill="#7f7f7f"/>
<rect x="221" y="736" width="731" height="8.2" rx="4.1" fill="#7f7f7f"/>
<text x="1153" y="745" text-anchor="end" font-family="Liberation Sans" font-size="12.9" fill="#111">10 &lt; 100</text>
<rect x="1138.5" y="750" width="15" height="20" fill="#f6f6f6"/>
<rect x="1142" y="750.2" width="8" height="16.6" rx="4" fill="#7f7f7f"/>
<text x="77.3" y="762.7" font-family="Liberation Sans" font-size="13.3" fill="#1515d0"><tspan font-style="italic">Command:</tspan> delete</text>
<text x="73" y="790" font-family="Liberation Sans" font-size="13.4" fill="#111">Command:</text>
<defs><linearGradient id="gCmdBtn" x1="0" y1="0" x2="0" y2="1"><stop offset="0" stop-color="#e8e8e8"/><stop offset="1" stop-color="#f6f6f6"/></linearGradient></defs>
<rect x="1127.5" y="772.5" width="25" height="25" fill="url(#gCmdBtn)" stroke="#c4c4c4" stroke-width="1"/>
<rect x="1133.5" y="780.5" width="13" height="9.4" fill="#f4f4f4" stroke="#333" stroke-width="1"/>
<rect x="1133" y="780" width="14" height="3" fill="#000"/>
<rect x="1145" y="780.8" width="1" height="1" fill="#fff"/>
</svg>
<!-- DOCK -->
<div class="a" style="left:1154px;top:108px;width:2px;height:690px;background:#bdbdbd"></div>
<div class="a" style="left:1156px;top:108px;width:299px;height:22px;background:linear-gradient(#e9e9e9,#dadada)"></div>
<div class="a" style="left:1156px;top:157px;width:299px;height:641px;background:#fff;border-right:1px solid #d4d4d4"></div>

<!-- RIGHT TOOLBAR -->
<div class="a" style="left:1455px;top:108px;width:45px;height:690px;background:linear-gradient(90deg,#ededed,#e2e2e2 35%,#d2d2d2 75%,#c6c6c6 96%,#b6b6b6)"></div>

<!-- STATUS BAR -->
<div class="a" style="left:0;top:798px;width:1500px;height:46px;background:#dcdcdc"></div>

<svg class="a" style="left:0;top:0" width="1500" height="844" viewBox="0 0 1500 844">
<defs>
<linearGradient id="gDockBtn" x1="0" y1="0" x2="0" y2="1"><stop offset="0" stop-color="#e4e4e4"/><stop offset="1" stop-color="#f3f3f3"/></linearGradient>
</defs>
<!-- dock title -->
<circle cx="1164" cy="118" r="6.8" fill="#6b6b6b"/>
<path d="M1161.2,115.2 L1166.8,120.8 M1166.8,115.2 L1161.2,120.8" stroke="#fff" stroke-width="1.7" stroke-linecap="round"/>
<circle cx="1182" cy="118" r="6.8" fill="#6b6b6b"/>
<rect x="1180.2" y="114.6" width="4.6" height="3.6" fill="none" stroke="#fff" stroke-width="1"/>
<rect x="1178.4" y="117" width="4.6" height="3.8" fill="#6b6b6b" stroke="#fff" stroke-width="1"/>
<text x="1322" y="123" text-anchor="middle" font-family="Liberation Sans" font-size="11.3" letter-spacing="0.2" fill="#2a2a2a">Layer List</text>
<!-- dock toolbar -->
<rect x="1155" y="130" width="300" height="27" fill="#b4b4b4"/>
<rect x="1156" y="131" width="58" height="24" fill="url(#gDockBtn)"/>
<rect x="1216" y="131" width="58" height="24" fill="url(#gDockBtn)"/>
<rect x="1276" y="131" width="58" height="24" fill="url(#gDockBtn)"/>
<rect x="1336" y="131" width="58" height="24" fill="url(#gDockBtn)"/>
<rect x="1396" y="131" width="58" height="24" fill="url(#gDockBtn)"/>
<g id="eye">
<path d="M1177.7,143 C1180,138 1183,137 1185.5,137 C1189,137 1191.5,140 1192.7,143 C1191.5,146 1189,148.2 1185.2,148.2 C1181.5,148.2 1179,146 1177.7,143 Z" fill="#000"/>
<ellipse cx="1185.3" cy="143.6" rx="4.6" ry="3.2" fill="#fff"/>
<circle cx="1185.3" cy="142.6" r="2.4" fill="#000"/>
<path d="M1184.5,141.6 l0.8,0.8" stroke="#888" stroke-width="0.6"/>
</g>
<use href="#eye" x="60" opacity="0.35"/>
<path d="M1303.5,137 h3.6 v4.4 h4.4 v3.6 h-4.4 v4.4 h-3.6 v-4.4 h-4.4 v-3.6 h4.4 Z" fill="#ff0000" stroke="#a00000" stroke-width="0.4"/>
<rect x="1359.3" y="141" width="11.4" height="4" fill="#ee0000"/>
<g id="pencil2">
<path d="M1418,149.7 L1419.3,145.4 L1429.6,135.2 C1430.5,134.3 1432.3,134.5 1432.8,135.6 C1433.2,136.5 1432.8,137.5 1432.2,138 L1422,148.3 Z" fill="#e8a838" stroke="#8a5a10" stroke-width="0.7" stroke-linejoin="round"/>
<path d="M1428.6,136.2 L1431,138.8 L1432.2,138 C1432.8,137.5 1433.2,136.5 1432.8,135.6 C1432.3,134.5 1430.5,134.3 1429.6,135.2 Z" fill="#e02020"/>
<path d="M1418,149.7 L1419.3,145.4 L1422,148.3 Z" fill="#f2dca8"/>
</g>
<!-- layer row -->
<rect x="1161.6" y="163.6" width="14.8" height="7.7" fill="#fff" stroke="#000" stroke-width="1.3"/>
<text transform="translate(1183.3,171.6) scale(0.85,1)" x="0" y="0" font-family="Liberation Sans" font-size="13.4" fill="#111" stroke="#111" stroke-width="0.3">0</text>
<use href="#pencil2" x="-23.3" y="23.5"/>
<use href="#eye" x="237.4" y="23.5" transform=""/>
<path d="M1441.5,166.5 v-2.3 a3.5,3.5 0 0 1 7,0 v2.3" fill="none" stroke="#bdbdbd" stroke-width="1.6"/>
<rect x="1440" y="166.3" width="10" height="7.4" rx="0.8" fill="#bdbdbd"/>

<!-- right toolbar -->
<g fill="#b8b8b8"><rect x="1462" y="116" width="2" height="2"/><rect x="1468" y="116" width="2" height="2"/><rect x="1474" y="116" width="2" height="2"/><rect x="1480" y="116" width="2" height="2"/><rect x="1486" y="116" width="2" height="2"/></g>
<rect x="1456.3" y="120.3" width="42.4" height="42.3" rx="5" fill="#b5b5b5"/>
<rect x="1456.2" y="417.5" width="43.8" height="41.9" rx="5" fill="#b5b5b5"/>
<g stroke="#4a4a4a" stroke-width="1" stroke-dasharray="1 2"><line x1="1458" y1="261.5" x2="1500" y2="261.5"/><line x1="1458" y1="409.5" x2="1500" y2="409.5"/></g>
<g id="win">
<rect x="1463.5" y="127.5" width="27" height="27" fill="#fff" stroke="#222" stroke-width="1"/>
<rect x="1463" y="127" width="28" height="4.5" fill="#000"/>
<rect x="1464.5" y="128" width="2.6" height="2.6" fill="#fff"/>
</g>
<use href="#win" y="47"/>
<use href="#win" y="93.4"/>
<use href="#win" y="149.2"/>
<use href="#win" y="195"/>
<use href="#win" y="241.5"/>
<use href="#win" y="297.5"/>
<use href="#win" y="344.3"/>
<!-- icon 1: layers -->
<path d="M1470.5,141 L1476,138 L1476,148.5 L1470.5,151.5 Z" fill="#c8c8c8" stroke="#444" stroke-width="0.8"/>
<path d="M1473,139.5 L1478.5,136.5 L1478.5,147 L1473,150 Z" fill="#e0e0e0" stroke="#444" stroke-width="0.8"/>
<path d="M1476,138 L1484.5,134 L1484.5,145 L1476,149 Z" fill="#fff" stroke="#444" stroke-width="0.8"/>
<path d="M1479,146 L1482,138 L1482.5,144 Z" fill="none" stroke="#e03030" stroke-width="0.8"/>
<!-- icon 2: square+circle -->
<rect x="1470.2" y="184.7" width="8.5" height="7" fill="#f2ecc8" stroke="#777" stroke-width="0.8"/>
<circle cx="1479.2" cy="191" r="4.6" fill="#f2ecc8" fill-opacity="0.9" stroke="#888" stroke-width="0.8"/>
<!-- icon 3: rounded rect -->
<rect x="1469.5" y="232" width="16" height="10" rx="2.5" fill="#f4f4f0" stroke="#bcd0e8" stroke-width="1"/>
<!-- icon 4: list -->
<g fill="#000"><rect x="1467" y="285" width="4" height="3"/><rect x="1467" y="291" width="4" height="3"/><rect x="1467" y="297" width="4" height="3"/></g>
<g fill="#fff" stroke="#333" stroke-width="0.8"><rect x="1473.5" y="285.2" width="13" height="2.6"/><rect x="1473.5" y="291.2" width="13" height="2.6"/><rect x="1473.5" y="297.2" width="13" height="2.6"/></g>
<!-- icon 5: funnel -->
<path d="M1470,332 L1485,332 L1479.5,338.5 L1479.5,346 L1476,343.5 L1476,338.5 Z" fill="#b0b0b0" stroke="#555" stroke-width="0.8"/>
<ellipse cx="1477.5" cy="332" rx="7.5" ry="1.6" fill="#888"/>
<!-- icon 6: screw -->
<path d="M1469.5,376.5 L1474,379 L1474,386 L1469.5,388.5 Z" fill="#fff" stroke="#333" stroke-width="0.9"/>
<rect x="1474" y="378.5" width="8.5" height="8" fill="#9a9a9a"/>
<rect x="1482" y="379.5" width="2" height="6" fill="#7a7a7a"/>
<line x1="1466" y1="382.5" x2="1488" y2="382.5" stroke="#f08080" stroke-width="0.8" stroke-dasharray="1.5 1"/>
<!-- icon 7: command -->
<g stroke="#666" stroke-width="0.6">
<line x1="1466" y1="436.5" x2="1478" y2="436.5"/><line x1="1466" y1="439.5" x2="1476" y2="439.5"/><line x1="1466" y1="442.5" x2="1478" y2="442.5"/><line x1="1466" y1="445.5" x2="1479" y2="445.5"/>
</g>
<line x1="1464" y1="448" x2="1490" y2="448" stroke="#333" stroke-width="0.7"/>
<line x1="1472" y1="450" x2="1488" y2="450" stroke="#555" stroke-width="1"/>
<!-- icon 8: clipboard -->
<rect x="1471" y="479" width="12.5" height="14" rx="0.8" fill="#c98a2c"/>
<rect x="1472.5" y="480.5" width="9.5" height="11.5" fill="#f6f6f6"/>
<rect x="1474" y="478" width="6.5" height="2.8" fill="#999"/>
<g stroke="#c0c0c0" stroke-width="0.6"><line x1="1474" y1="484" x2="1480.5" y2="484"/><line x1="1474" y1="486" x2="1480.5" y2="486"/><line x1="1474" y1="488" x2="1479" y2="488"/></g>

<!-- status bar -->
<g font-family="Liberation Sans" font-size="9.6" letter-spacing="0.5" fill="#1e1e1e" stroke="#1e1e1e" stroke-width="0.15">
<text x="2.2" y="815.6">63.4,83.4</text>
<text x="2.2" y="835.8">@-56.6,23.4</text>
<text x="256.2" y="815.6">104.7622&lt;53°</text>
<text x="256.2" y="835.8">@61.2464&lt;158°</text>
</g>
<line x1="253.8" y1="802" x2="253.8" y2="841.5" stroke="#777" stroke-width="1"/>
<g fill="#c6c6c6"><circle cx="509.4" cy="821.6" r="3"/><circle cx="943.3" cy="821.6" r="3"/><circle cx="1272.2" cy="821.6" r="3"/></g>
<g font-family="Liberation Sans" font-size="9.6" letter-spacing="0.4" fill="#1e1e1e" stroke="#1e1e1e" stroke-width="0.05" text-anchor="end">
<text x="700.6" y="820">Select entity or region</text>
<text x="700.6" y="831">Move entity or reference</text>
</g>
<text x="949" y="825.4" font-family="Liberation Sans" font-size="9.6" letter-spacing="0.45" fill="#1e1e1e" stroke="#1e1e1e" stroke-width="0.05">No entities selected.</text>
<!-- mouse -->
<path d="M726,806.5 C721,806.5 717.5,810 717.5,816 L717.5,826 C717.5,832 721,835.3 726,835.3 C731,835.3 734.5,832 734.5,826 L734.5,816 C734.5,810 731,806.5 726,806.5 Z" fill="#fff" stroke="#333" stroke-width="0.9"/>
<path d="M717.5,818.5 Q726,816.5 734.5,818.5" fill="none" stroke="#333" stroke-width="0.9"/>
<rect x="724.6" y="808.5" width="2.8" height="6.5" rx="1.4" fill="#fff" stroke="#333" stroke-width="0.8"/>
</svg>
</body></html>
